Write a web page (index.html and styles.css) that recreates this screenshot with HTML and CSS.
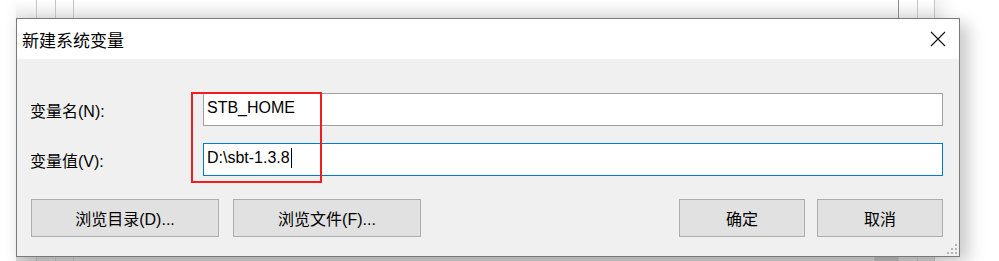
FILE: index.html
```html
<!DOCTYPE html>
<html lang="zh-CN">
<head>
    <meta charset="UTF-8">
    <title>新建系统变量</title>
    <link rel="stylesheet" href="styles.css">
</head>
<body>

<div class="desktop">
    <!-- 后面的窗口 -->
    <div class="backdrop">
        <div class="bg-strip bg-top">
            <span class="cell w21"></span>
            <span class="cell w19"></span>
            <span class="cell w18"></span>
            <span class="cell w825"></span>
            <span class="cell w19"></span>
            <span class="cell"></span>
        </div>
        <div class="bg-fill"></div>
        <div class="bg-strip bg-bottom">
            <span class="cell w21"></span>
            <span class="cell w19"></span>
            <span class="cell w18"></span>
            <span class="cell w801"></span>
            <span class="cell dark w24"></span>
            <span class="cell w19"></span>
            <span class="cell"></span>
        </div>
    </div>

    <!-- 对话框 -->
    <div class="dialog">
        <div class="titlebar">
            <span class="title">新建系统变量</span>
            <svg class="close" width="16" height="16" viewBox="0 0 16 16">
                <path d="M1 1 L15 15 M15 1 L1 15" stroke="#111" stroke-width="1.1" fill="none"/>
            </svg>
        </div>

        <div class="content">
            <div class="row">
                <label class="label" for="var-name">变量名(N):</label>
                <div class="field" id="var-name">STB_HOME</div>
            </div>
            <div class="row">
                <label class="label" for="var-value">变量值(V):</label>
                <div class="field focused" id="var-value">D:\sbt-1.3.8<span class="caret"></span></div>
            </div>

            <div class="buttons">
                <button class="btn wide">浏览目录(D)...</button>
                <button class="btn wide">浏览文件(F)...</button>
                <span class="spacer"></span>
                <button class="btn">确定</button>
                <button class="btn">取消</button>
            </div>
        </div>

        <svg class="grip" width="12" height="12" viewBox="0 0 12 12">
            <rect x="9" y="1" width="2" height="2" fill="#b4b4b4"/>
            <rect x="5" y="5" width="2" height="2" fill="#b4b4b4"/>
            <rect x="9" y="5" width="2" height="2" fill="#b4b4b4"/>
            <rect x="1" y="9" width="2" height="2" fill="#b4b4b4"/>
            <rect x="5" y="9" width="2" height="2" fill="#b4b4b4"/>
            <rect x="9" y="9" width="2" height="2" fill="#b4b4b4"/>
        </svg>

        <!-- 标注用的红框 -->
        <div class="mark"></div>
    </div>
</div>

</body>
</html>
```

FILE: styles.css
```css
html, body {
    margin: 0;
    padding: 0;
    background: #fff;
    overflow: hidden;
}
body {
    font-family: 'Liberation Sans', 'Noto Sans CJK SC', sans-serif;
    color: #000;
}
.desktop {
    position: relative;
    width: 999px;
    height: 261px;
}

/* 后面的窗口 */
.backdrop {
    margin-left: 16px;
    width: 919px;
    height: 261px;
    display: flex;
    flex-direction: column;
    box-shadow: 6px 0 18px rgba(0,0,0,0.12);
}
.bg-strip {
    display: flex;
}
.bg-top {
    height: 18px;
    background: linear-gradient(#ffffff, #e9e9e9);
}
.bg-fill {
    flex: 1;
    background: #fff;
}
.bg-bottom {
    height: 4px;
    background: #d6d6d6;
}
.cell {
    border-right: 1px solid #c4c4c4;
    box-sizing: border-box;
    flex: 1;
}
.bg-top .cell:nth-child(4) { border-right-color: #8c8c8c; }
.cell.dark { background: #bcbcbc; }
.w21 { flex: 0 0 21px; }
.w19 { flex: 0 0 19px; }
.w18 { flex: 0 0 18px; }
.w24 { flex: 0 0 24px; }
.w801 { flex: 0 0 801px; }
.w825 { flex: 0 0 825px; }

/* 对话框 */
.dialog {
    position: absolute;
    left: 16px;
    top: 18px;
    width: 944px;
    height: 239px;
    box-sizing: border-box;
    border: 1px solid #7a7a7a;
    background: #f0f0f0;
    box-shadow: 8px 6px 16px rgba(0,0,0,0.22);
    display: flex;
    flex-direction: column;
}
.titlebar {
    height: 40px;
    background: #fff;
    display: flex;
    align-items: center;
    padding-left: 5px;
    padding-right: 13px;
}
.title {
    font-size: 17px;
    flex: 1;
}
.close {
    display: block;
}

.content {
    padding: 34px 16px 0 13px;
    display: flex;
    flex-direction: column;
    gap: 17px;
}
.row {
    display: flex;
    align-items: center;
    height: 33px;
}
.label {
    width: 173px;
    font-size: 16px;
}
.field {
    flex: 1;
    height: 33px;
    box-sizing: border-box;
    border: 1px solid #a0a0a0;
    background: #fff;
    font-size: 16px;
    padding-left: 3px;
    display: flex;
    align-items: center;
    padding-bottom: 3px;
}
.field.focused {
    border-color: #0078d7;
}
.caret {
    display: inline-block;
    width: 1px;
    height: 20px;
    background: #000;
    margin-left: 1px;
}

.buttons {
    display: flex;
    margin-top: 6px;
    padding-left: 1px;
    gap: 12px;
}
.btn {
    font-family: inherit;
    font-size: 16px;
    color: #000;
    height: 38px;
    width: 126px;
    background: #e1e1e1;
    border: 1px solid #adadad;
    padding: 0;
}
.btn.wide {
    width: 188px;
    margin-right: 2px;
}
.spacer {
    flex: 1;
}

.grip {
    position: absolute;
    right: 1px;
    bottom: 1px;
}
.mark {
    position: absolute;
    left: 174px;
    top: 73px;
    width: 131px;
    height: 91px;
    box-sizing: border-box;
    border: 2px solid #f21d1d;
}
```
